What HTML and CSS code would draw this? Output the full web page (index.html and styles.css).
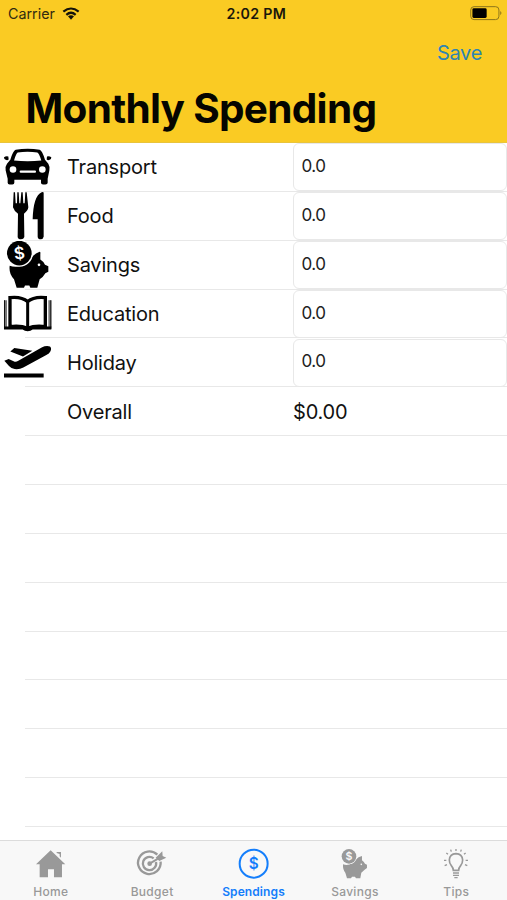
FILE: index.html
```html
<!DOCTYPE html>
<html lang="en">
<head>
<meta charset="utf-8">
<title>Monthly Spending</title>
<link rel="stylesheet" href="styles.css">
</head>
<body>
<div class="screen">
  <header class="header">
    <div class="status">
      <div class="carrier"><span>Carrier</span>
        <svg class="wifi" viewBox="0 0 54 39"><path d="M4 14Q27-5 50 14M13 23.500Q27 11 41 23.500" fill="none" stroke="#15130a" stroke-width="6.500"/><path d="M18 28Q27 21 36 28L27 38Z" fill="#15130a"/></svg>
      </div>
      <span class="time">2:02 PM</span>
      <svg class="battery" viewBox="0 0 96 44"><rect x="2" y="2" width="85" height="39" rx="10" fill="none" stroke="#8c741b" stroke-width="3"/><rect x="7" y="7" width="43" height="29" rx="4"/><path d="M91 15Q98 21 91 28Z" fill="#8c741b"/></svg>
    </div>
    <nav class="actions"><a class="save">Save</a></nav>
    <h1 class="title">Monthly Spending</h1>
  </header>

  <main class="list">
    <div class="row">
      <svg class="icon" viewBox="0 7.5 160 146.5"><path d="M47 28Q83 21 119 28Q127 31 135 58L145 70Q150 78 148 90L143 115V127Q143 132 136 132H129Q123 132 123 127V118H43V127Q43 132 37 132H29Q23 132 23 127V115L17 90Q15 78 21 70L31 58Q39 31 47 28ZM12 50Q18 46 25 48L26 57Q22 61 17 58Q12 56 12 50ZM154 50Q148 46 141 48L140 57Q144 61 149 58Q154 56 154 50Z"/><path d="M53 36Q83 31 112 36Q117 37 124 60Q83 65 42 60Q49 37 53 36Z" fill="#fff"/><circle cx="39" cy="87" r="10" fill="#fff"/><circle cx="127" cy="87" r="10" fill="#fff"/><rect x="59" y="90" width="49" height="7" rx="3" fill="#fff"/></svg>
      <span class="name">Transport</span><input class="field" value="0.0">
    </div>
    <div class="row">
      <svg class="icon" viewBox="0 154 160 146.5"><path d="M41 155H45L47 188H51L52 155H56L58 188H61L64 155H68L70 188H74L76 155H80L85 200Q84 210 72 219L73 289Q71 296 63 296Q54 296 53 289L54 219Q42 211 39 200ZM131 156V288Q129 296 122 296Q114 296 113 288V236H98Q100 166 125 155Q130 153 131 156Z"/></svg>
      <span class="name">Food</span><input class="field" value="0.0">
    </div>
    <div class="row">
      <svg class="icon" viewBox="0 12.6 160 146.5"><path d="M29 87Q60 99 93 66Q102 50 119 45Q122 45 121 52V68Q131 74 135 84L145 88V105L136 109Q130 120 119 127L112 153H91L88 146H75L72 153H50L42 127Q26 112 29 87Z"/><circle cx="58" cy="49" r="41" fill="#fff"/><circle cx="58" cy="49" r="37"/><circle cx="117" cy="84" r="4" fill="#fff"/><text class="coin" x="58" y="67" text-anchor="middle" transform="rotate(-8 58 49)">$</text></svg>
      <span class="name">Savings</span><input class="field" value="0.0">
    </div>
    <div class="row">
      <svg class="icon" viewBox="0 9.2 160 146.5"><path d="M12 40H21V121H12ZM145 40H154V121H145Z" fill="#777"/><path d="M13.500 40V126M152.500 40V126" stroke="#111" stroke-width="3"/><path d="M30 32Q64 28 83 44Q102 28 136 32V119Q104 115 83 124Q62 115 30 119Z" fill="#fff" stroke="#000" stroke-width="10"/><path d="M83 43V124" stroke="#000" stroke-width="9"/><path d="M12 119H64Q75 120 83 124Q91 120 102 119H154V128H98Q92 133 83 133Q74 133 68 128H12Z"/></svg>
      <span class="name">Education</span><input class="field" value="0.0">
    </div>
    <div class="row">
      <svg class="icon" viewBox="0 155.7 160 146.5"><path d="M12 262H131V274H12ZM13 224L26 219L44 227Q49 228 55 224L125 184Q139 177 150 181Q156 187 151 196Q148 202 139 207L70 244Q58 251 44 249Q34 248 27 240ZM31 196L43 186L97 194L69 211Z"/></svg>
      <span class="name">Holiday</span><input class="field" value="0.0">
    </div>
    <div class="row plain"><span class="name">Overall</span><span class="total">$0.00</span></div>
    <div class="row plain"></div>
    <div class="row plain"></div>
    <div class="row plain"></div>
    <div class="row plain"></div>
    <div class="row plain"></div>
    <div class="row plain"></div>
    <div class="row plain"></div>
    <div class="row plain"></div>
  </main>

  <footer class="tabs">
    <a class="tab"><svg class="glyph" viewBox="104 80 100 100"><path d="M154 90L198 132H188V171H164V147H146V171H121V132H110ZM172 95H185V112L181 108V101L172 98Z"/></svg><span>Home</span></a>
    <a class="tab"><svg class="glyph" viewBox="407 80 100 100"><path d="M474 103A34 34 0 1 0 484 124M463 114A20 20 0 1 0 470 125" fill="none" stroke="currentColor" stroke-width="7"/><circle cx="451" cy="130" r="7"/><path d="M451 130L475 116" stroke="currentColor" stroke-width="6"/><path d="M469 112L489 93L490 107L501 112L480 122Z"/></svg><span>Budget</span></a>
    <a class="tab active"><svg class="glyph" viewBox="710 80 100 100"><circle cx="760" cy="130" r="42" fill="none" stroke="currentColor" stroke-width="6"/><text class="sign" x="760" y="147" text-anchor="middle">$</text></svg><span>Spendings</span></a>
    <a class="tab"><svg class="glyph" viewBox="252 80 100 100"><path d="M267 132Q290 139 307 117Q312 109 324 107V120Q331 125 333 130L339 133V143L332 148L322 157L319 174H306L303 169H294L291 174H279L274 157Q266 148 267 132Z"/><circle cx="285" cy="108" r="24" fill="#f8f8f8"/><circle cx="285" cy="108" r="22"/><circle cx="322" cy="132" r="2.5" fill="#f8f8f8"/><text class="mini" x="285" y="119" text-anchor="middle">$</text></svg><span>Savings</span></a>
    <a class="tab"><svg class="glyph" viewBox="558 80 100 100"><path d="M598 150Q598 143 592 136Q586 129 586 119Q587 101 606 100Q625 101 626 119Q626 129 620 136Q614 143 614 150Z" fill="none" stroke="currentColor" stroke-width="5"/><path d="M597 158H615M597 165H615M601 172H611M606 86V92M590 88L592 94M622 88L620 94M577 98L582 102M635 98L630 102M570 120H577M635 120H642M572 136L579 133M640 136L633 133" fill="none" stroke="currentColor" stroke-width="4"/></svg><span>Tips</span></a>
  </footer>
</div>
</body>
</html>
```
FILE: styles.css
```css
* { box-sizing: border-box; }
body { margin: 0; font-family: Inter, "Liberation Sans", sans-serif; color: #111; background: #fff; }
.screen { width: 507px; height: 900px; display: flex; flex-direction: column; overflow: hidden; }
.header { height: 143px; flex: none; background: #facb23; border-bottom: 1px solid #e9c43b; }
.status { height: 27px; display: grid; grid-template-columns: 1fr auto 1fr; align-items: center; padding: 0 5px 0 8px; }
.carrier { display: flex; align-items: center; gap: 7px; font-size: 14.3px; color: #312a10; }
.wifi { width: 18px; height: 13px; }
.time { font-size: 14.2px; font-weight: 600; letter-spacing: .3px; color: #1a170b; transform: translateX(1.3px); }
.battery { width: 32px; height: 14.6px; justify-self: end; }
.actions { height: 51px; display: flex; align-items: center; justify-content: flex-end; padding-right: 25px; }
.save { font-size: 20px; letter-spacing: -.3px; color: #2c84b4; }
.title { margin: 0; padding-left: 25.5px; line-height: 61px; font-size: 40.5px; font-weight: 700; letter-spacing: -.7px; color: #050500; }
.list { flex: none; height: 697px; overflow: hidden; }
.row { height: 48.86px; display: grid; grid-template-columns: 67px 226px 214px; align-items: center; background: linear-gradient(#e8e8e8, #e8e8e8) right bottom / calc(100% - 25px) 1px no-repeat; }
.icon { width: 53.33px; height: 48.83px; display: block; }
.name { grid-column: 2; font-size: 20px; letter-spacing: -.2px; }
.total { font-size: 20px; letter-spacing: -.2px; }
.field { width: 214px; height: 48px; padding: 0 8px 3px 7.5px; border: 1px solid #e8e8e8; border-radius: 6px; background: #fff; font: 17px Inter, sans-serif; letter-spacing: -.5px; color: #222; outline: none; }
.coin { font: 600 50px Inter, sans-serif; fill: #fff; }
.tabs { flex: 1; display: flex; background: #f8f8f8; border-top: 1px solid #dcdcdc; }
.tab { flex: 1; display: flex; flex-direction: column; align-items: center; padding-top: 6px; color: #999; font-size: 12px; font-weight: 500; letter-spacing: .3px; }
.tab span { line-height: 15px; margin-top: 4px; }
.active { color: #147efb; font-weight: 600; letter-spacing: .1px; }
.glyph { width: 33.3px; height: 33.3px; fill: #999; }
.active .glyph { fill: #147efb; }
.sign { font: 600 46px Inter, sans-serif; }
.mini { font: 600 32px Inter, sans-serif; fill: #f8f8f8; }
```
